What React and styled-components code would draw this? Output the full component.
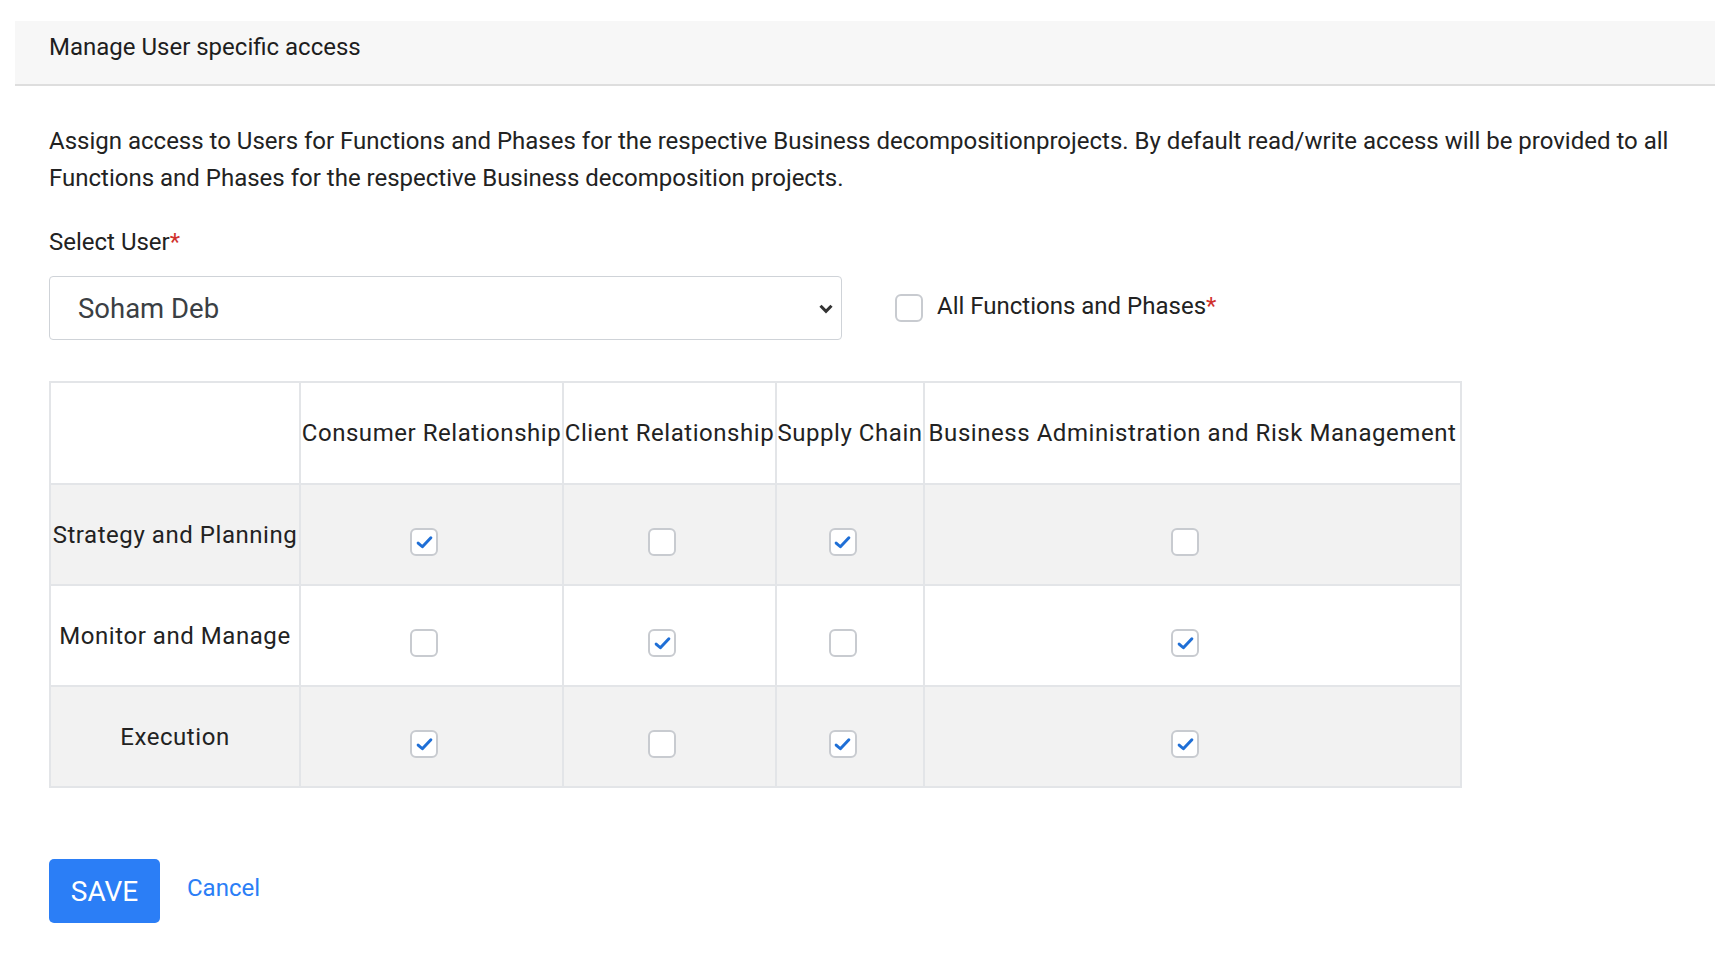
import React, { useState } from "react";
import styled, { createGlobalStyle } from "styled-components";

const GlobalStyle = createGlobalStyle`
  body {
    margin: 0;
    background: #fff;
    font-family: Roboto, "Liberation Sans", Arial, sans-serif;
    color: #212529;
  }
`;

const Page = styled.div`
  padding: 21px 0 0 15px;
`;

const Header = styled.div`
  background: #f7f7f7;
  border-bottom: 2px solid #dedede;
  height: 65px;
  box-sizing: border-box;
  padding: 12px 0 0 34px;
  font-size: 24px;
  line-height: 28px;
  color: #1e1e1e;
`;

const Body = styled.div`
  padding: 37px 44px 0 34px;
`;

const Intro = styled.p`
  margin: 0;
  font-size: 24px;
  line-height: 37px;
  color: #222;
`;

const Label = styled.div`
  margin-top: 31px;
  font-size: 24px;
  line-height: 28px;
  color: #222;
`;

const Star = styled.span`
  color: #d0312d;
`;

const SelectRow = styled.div`
  display: flex;
  align-items: center;
  margin-top: 20px;
`;

const SelectBox = styled.div`
  width: 793px;
  height: 64px;
  box-sizing: border-box;
  border: 1px solid #cfd3d8;
  border-radius: 4px;
  display: flex;
  align-items: center;
  justify-content: space-between;
  padding: 0 7px 0 28px;
  font-size: 27.5px;
  color: #3b3f44;
`;

const AllToggle = styled.label`
  display: flex;
  align-items: center;
  gap: 14px;
  margin-left: 53px;
  font-size: 24px;
  color: #222;
`;

const ToggleText = styled.span`
  margin-bottom: 4px;
`;

const Box = styled.span`
  display: inline-flex;
  align-items: center;
  justify-content: center;
  width: 28px;
  height: 28px;
  box-sizing: border-box;
  border: 2px solid #c8cbd0;
  border-radius: 6px;
  background: #fff;
  cursor: pointer;
  vertical-align: middle;
`;

const Table = styled.table`
  margin-top: 41px;
  border-collapse: collapse;
  width: 1411px;
  table-layout: fixed;
  letter-spacing: 0.55px;
  font-size: 24px;
  color: #222;
`;

const HeadCell = styled.th`
  height: 100px;
  border: 2px solid #e3e5e8;
  font-weight: 400;
  white-space: nowrap;
  padding: 0;
  background: #fff;
`;

const Row = styled.tr`
  background: ${(p) => (p.$shade ? "#f2f2f2" : "#fff")};
`;

const RowHead = styled.td`
  height: 99px;
  border: 2px solid #e3e5e8;
  text-align: center;
  white-space: nowrap;
  padding: 0;
`;

const Cell = styled.td`
  border: 2px solid #e3e5e8;
  text-align: center;
  padding: 14px 15px 0 0;
`;

const Actions = styled.div`
  display: flex;
  align-items: center;
  gap: 27px;
  margin-top: 71px;
`;

const SaveButton = styled.button`
  width: 111px;
  height: 64px;
  border: none;
  border-radius: 5px;
  background: #2b7ef6;
  color: #fff;
  font-family: Roboto, "Liberation Sans", Arial, sans-serif;
  font-size: 28px;
  cursor: pointer;
`;

const CancelLink = styled.a`
  color: #2b7ef6;
  font-size: 24px;
  text-decoration: none;
  cursor: pointer;
  margin-bottom: 6px;
`;

const Check = ({ checked, onClick }) => (
  <Box onClick={onClick}>
    {checked && (
      <svg width="17" height="15" viewBox="0 0 16 14">
        <path
          d="M2 7.5 L6 11 L14 2.5"
          fill="none"
          stroke="#1f6fd6"
          strokeWidth="2.8"
          strokeLinecap="round"
          strokeLinejoin="round"
        />
      </svg>
    )}
  </Box>
);

const columns = [
  "Consumer Relationship",
  "Client Relationship",
  "Supply Chain",
  "Business Administration and Risk Management",
];

const widths = [250, 263, 213, 148, 537];

const initial = [
  { name: "Strategy and Planning", values: [true, false, true, false] },
  { name: "Monitor and Manage", values: [false, true, false, true] },
  { name: "Execution", values: [true, false, true, true] },
];

export default function App() {
  const [rows, setRows] = useState(initial);
  const [all, setAll] = useState(false);

  const toggle = (r, c) =>
    setRows((prev) =>
      prev.map((row, i) =>
        i !== r
          ? row
          : { ...row, values: row.values.map((v, j) => (j === c ? !v : v)) }
      )
    );

  return (
    <Page>
      <GlobalStyle />
      <Header>Manage User specific access</Header>
      <Body>
        <Intro>
          Assign access to Users for Functions and Phases for the respective
          Business decompositionprojects. By default read/write access will be
          provided to all Functions and Phases for the respective Business
          decomposition projects.
        </Intro>
        <Label>
          Select User<Star>*</Star>
        </Label>
        <SelectRow>
          <SelectBox>
            Soham Deb
            <svg width="16" height="11" viewBox="0 0 14 10">
              <path
                d="M2 2.5 L7 7.5 L12 2.5"
                fill="none"
                stroke="#333"
                strokeWidth="2.8"
              />
            </svg>
          </SelectBox>
          <AllToggle>
            <Check checked={all} onClick={() => setAll(!all)} />
            <ToggleText>
              All Functions and Phases<Star>*</Star>
            </ToggleText>
          </AllToggle>
        </SelectRow>
        <Table>
          <colgroup>
            {widths.map((w, i) => (
              <col key={i} style={{ width: w }} />
            ))}
          </colgroup>
          <thead>
            <tr>
              <HeadCell />
              {columns.map((c) => (
                <HeadCell key={c}>{c}</HeadCell>
              ))}
            </tr>
          </thead>
          <tbody>
            {rows.map((row, r) => (
              <Row key={row.name} $shade={r % 2 === 0}>
                <RowHead>{row.name}</RowHead>
                {row.values.map((v, c) => (
                  <Cell key={c}>
                    <Check checked={v} onClick={() => toggle(r, c)} />
                  </Cell>
                ))}
              </Row>
            ))}
          </tbody>
        </Table>
        <Actions>
          <SaveButton>SAVE</SaveButton>
          <CancelLink>Cancel</CancelLink>
        </Actions>
      </Body>
    </Page>
  );
}
